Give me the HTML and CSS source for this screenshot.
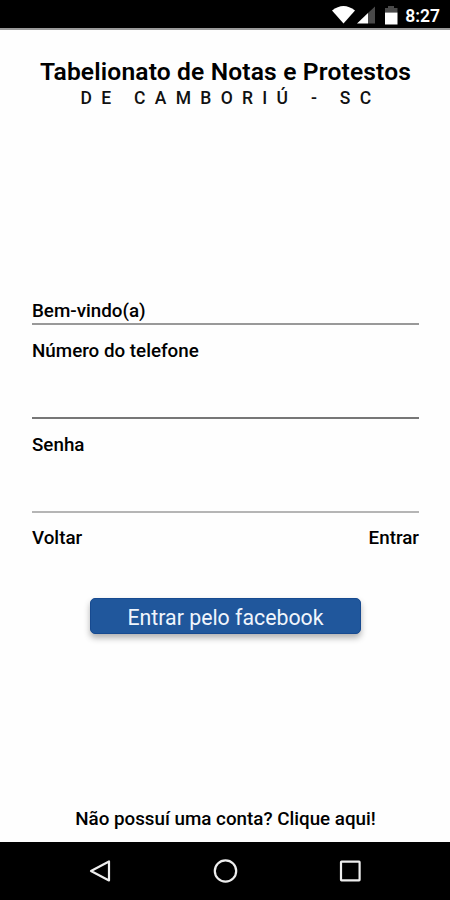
FILE: index.html
```
<!DOCTYPE html>
<html lang="pt-BR">
  <head>
    <meta charset="utf-8">
    <meta name="viewport" content="width=device-width, initial-scale=1">
    <title>Tabelionato de Notas e Protestos</title>
    <link rel="stylesheet" href="styles.css">
  </head>
  <body>
    <div class="statusbar">
      <svg class="status-icons" width="70" height="28" viewBox="0 0 70 28">
        <path fill="#fff" d="M2 10.5Q13.500 1.500 25 10.500L13.500 23.500Z"/>
        <path fill="#fff" d="M27 23.500L38 13V23.500Z"/>
        <path fill="#4a4a4a" d="M38 13L45 6.500V23.500H38Z"/>
        <path fill="#4a4a4a" d="M55 8H58V6H64V8H67.500V12.500H55Z"/>
        <path fill="#fff" d="M55 12.500H67.500V24.500H55Z"/>
      </svg>
      <span class="clock">8:27</span>
    </div>
    <main class="screen">
      <h1 class="title">Tabelionato de Notas e Protestos</h1>
      <p class="subtitle">DE CAMBORIÚ - SC</p>
      <form class="login">
        <p class="welcome">Bem-vindo(a)</p>
        <label class="field">
          <span>Número do telefone</span>
          <input type="tel">
        </label>
        <label class="field last">
          <span>Senha</span>
          <input type="password">
        </label>
        <div class="actions">
          <a>Voltar</a>
          <a>Entrar</a>
        </div>
        <button class="btn" type="button">Entrar pelo facebook</button>
      </form>
      <p class="signup">Não possuí uma conta? Clique aqui!</p>
    </main>
    <div class="navbar">
      <svg width="26" height="26" viewBox="0 0 26 26"><path d="M22 3.500V22.500L4 13Z"/></svg>
      <svg width="26" height="26" viewBox="0 0 26 26"><circle cx="13.500" cy="13" r="10.700"/></svg>
      <svg width="26" height="26" viewBox="0 0 26 26"><rect x="4" y="3.700" width="18.600" height="18.600" rx="0.500"/></svg>
    </div>
  </body>
</html>
```
FILE: styles.css
```
* {
  box-sizing: border-box;
  margin: 0;
  padding: 0;
  font-family: Roboto, sans-serif;
}

body {
  display: flex;
  flex-direction: column;
  height: 900px;
  background-color: #fefefe;
  color: #111;
}

.statusbar {
  display: flex;
  justify-content: flex-end;
  height: 30px;
  padding-right: 10px;
  background-color: #000;
  border-bottom: 2px solid #999;
  color: #fff;
}

.status-icons {
  margin-right: 5px;
}

.clock {
  font-size: 17.5px;
  font-weight: 600;
  line-height: 32px;
}

.screen {
  display: flex;
  flex-direction: column;
  flex: 1;
  padding: 28px 31px 0 32px;
}

.title {
  color: #000;
  font-size: 24.6px;
  font-weight: 600;
  line-height: 28px;
  letter-spacing: 0.15px;
  text-align: center;
  white-space: nowrap;
}

.subtitle {
  padding-left: 10px;
  font-size: 17.5px;
  font-weight: 500;
  line-height: 24px;
  letter-spacing: 9.3px;
  text-align: center;
  white-space: nowrap;
}

.login {
  display: flex;
  flex-direction: column;
  margin-top: 190px;
  color: #000;
  font-size: 18.8px;
  font-weight: 500;
  line-height: 22px;
}

.welcome {
  height: 25px;
  border-bottom: 2px solid #999;
}

.field {
  display: flex;
  flex-direction: column;
  height: 94px;
  padding-top: 15px;
  border-bottom: 2px solid #777;
}

.field.last {
  border-color: #b5b5b5;
}

.field input {
  flex: 1;
  min-height: 0;
  border: none;
  outline: none;
  background: none;
}

.actions {
  display: flex;
  justify-content: space-between;
  padding-top: 14px;
}

.btn {
  align-self: center;
  width: 271px;
  height: 36px;
  margin-top: 49px;
  padding-top: 2px;
  border: 1px solid #174a90;
  border-radius: 5px;
  background-color: #20579c;
  box-shadow: 0 4px 6px rgba(0, 0, 0, 0.3);
  color: #f0f5fc;
  font-size: 21.3px;
}

.signup {
  margin-top: auto;
  margin-bottom: 12px;
  color: #000;
  font-size: 18.8px;
  font-weight: 500;
  line-height: 22px;
  text-align: center;
}

.navbar {
  display: flex;
  justify-content: center;
  align-items: center;
  gap: 99px;
  height: 58px;
  background-color: #000;
}

.navbar svg {
  fill: none;
  stroke: #eee;
  stroke-width: 2.2;
  stroke-linejoin: round;
}
```
